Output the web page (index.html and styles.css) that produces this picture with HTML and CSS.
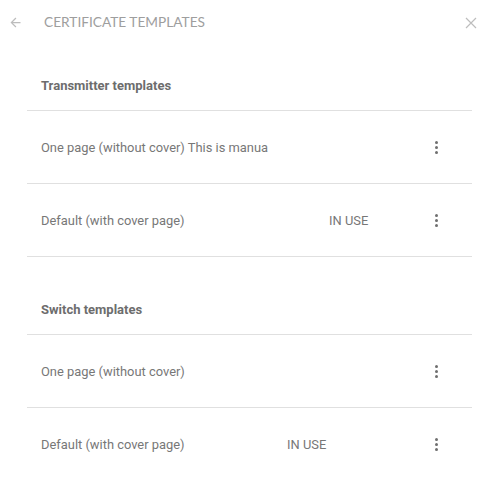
FILE: index.html
```html
<!DOCTYPE html>
<html>
<head>
<meta charset="utf-8">
<link rel="stylesheet" href="styles.css">
</head>
<body>
<div class="dialog">
  <header class="topbar">
    <svg class="back" viewBox="0 0 24 24" width="15" height="15"><path d="M20 11H7.83l5.59-5.59L12 4l-8 8 8 8 1.41-1.41L7.83 13H20v-2z" fill="currentColor"/></svg>
    <h1 class="title">CERTIFICATE TEMPLATES</h1>
    <svg class="close" viewBox="0 0 12 12" width="12" height="12"><path d="M1 1L11 11M11 1L1 11" stroke="currentColor" stroke-width="1.2" fill="none"/></svg>
  </header>
  <main class="content">
    <section class="section sec-a">
      <div class="section-head">Transmitter templates</div>
      <div class="row">
        <span class="name">One page (without cover) This is manua</span>
        <span class="status"></span>
        <span class="more"><i></i><i></i><i></i></span>
      </div>
      <div class="row">
        <span class="name">Default (with cover page)</span>
        <span class="status">IN USE</span>
        <span class="more"><i></i><i></i><i></i></span>
      </div>
    </section>
    <section class="section sec-b">
      <div class="section-head">Switch templates</div>
      <div class="row">
        <span class="name">One page (without cover)</span>
        <span class="status"></span>
        <span class="more"><i></i><i></i><i></i></span>
      </div>
      <div class="row">
        <span class="name">Default (with cover page)</span>
        <span class="status">IN USE</span>
        <span class="more"><i></i><i></i><i></i></span>
      </div>
    </section>
  </main>
</div>
</body>
</html>
```
FILE: styles.css
```css
html, body {
  margin: 0;
  padding: 0;
  background: #ffffff;
}
body {
  font-family: Roboto, "Liberation Sans", sans-serif;
  color: #757575;
}
.dialog {
  width: 484px;
}
.topbar {
  height: 42px;
  display: flex;
  align-items: center;
  padding: 0 7px 0 8px;
  color: #bdbdbd;
}
.back {
  flex: none;
  margin-top: 2px;
}
.title {
  flex: 1;
  margin: 0 0 0 21px;
  font-family: Lato, "Liberation Sans", sans-serif;
  font-weight: 400;
  font-size: 13.7px;
  color: #9e9e9e;
  letter-spacing: 0;
}
.close {
  flex: none;
  margin-top: 4px;
}
.content {
  padding: 19px 12px 0 27px;
}
.section + .section {
  margin-top: 28px;
}
.section-head {
  height: 49px;
  display: flex;
  align-items: center;
  padding-left: 14px;
  font-size: 13px;
  font-weight: 700;
  color: #6d6d6d;
  border-bottom: 1px solid #e0e0e0;
}
.row {
  height: 72px;
  display: grid;
  align-items: center;
  padding: 0 24px 0 14px;
  border-bottom: 1px solid #e0e0e0;
  font-size: 12.9px;
  color: #777777;
}
.sec-a .row {
  grid-template-columns: 288px 1fr 24px;
}
.sec-b .row {
  grid-template-columns: 246px 1fr 24px;
}
.more {
  display: flex;
  flex-direction: column;
  align-items: center;
  gap: 2px;
}
.more i {
  display: block;
  width: 3px;
  height: 3px;
  border-radius: 50%;
  background: #6f6f6f;
}
```
